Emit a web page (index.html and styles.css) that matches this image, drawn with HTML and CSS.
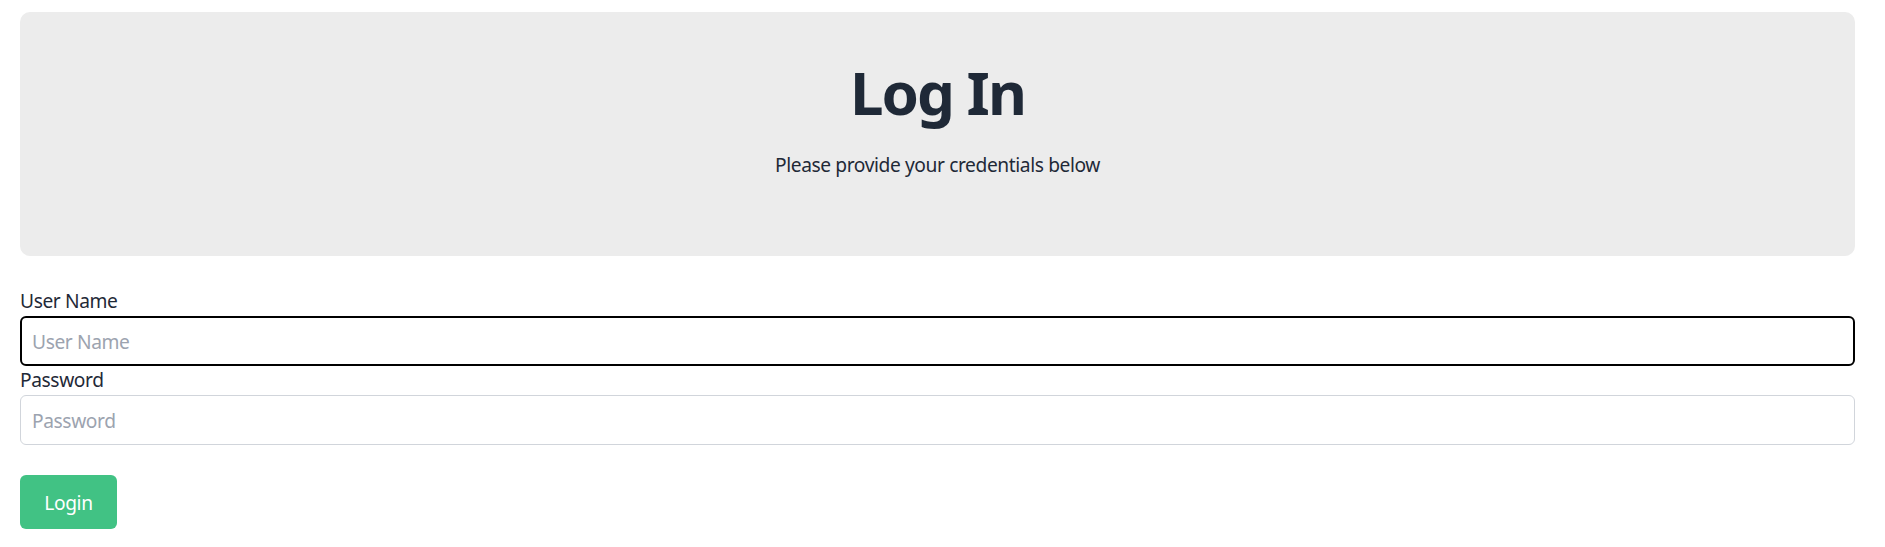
FILE: index.html
```html
<!DOCTYPE html>
<html lang="en">
<head>
<meta charset="utf-8">
<title>Log In</title>
<link rel="stylesheet" href="styles.css">
</head>
<body>
<main class="page">
  <section class="hero">
    <h1 class="hero-title">Log In</h1>
    <p class="hero-sub">Please provide your credentials below</p>
  </section>
  <form class="login-form">
    <label class="field-label" for="username">User Name</label>
    <input class="field-input is-focused" id="username" type="text" placeholder="User Name">
    <label class="field-label" for="password">Password</label>
    <input class="field-input" id="password" type="password" placeholder="Password">
    <button class="btn-login" type="button">Login</button>
  </form>
</main>
</body>
</html>
```

FILE: styles.css
```css
html, body {
  margin: 0;
  padding: 0;
  background: #ffffff;
}

body {
  font-family: "Noto Sans", "Open Sans", sans-serif;
  color: #1f2937;
  font-size: 19.2px;
  letter-spacing: -0.4px;
}

.page {
  padding: 12px 30px 0 20px;
}

.hero {
  background: #ececec;
  border-radius: 10px;
  height: 244px;
  box-sizing: border-box;
  padding-top: 50px;
  text-align: center;
}

.hero-title {
  margin: 0;
  font-size: 60px;
  line-height: 60px;
  font-weight: 700;
  letter-spacing: -2px;
  color: #1f2937;
}

.hero-sub {
  margin: 30px 0 0;
  font-size: 19.2px;
  line-height: 26px;
  color: #1f2937;
}

.login-form {
  display: flex;
  flex-direction: column;
  align-items: flex-start;
  margin-top: 32px;
}

.field-label {
  font-size: 19.2px;
  line-height: 26px;
  color: #1f2937;
}

.field-input {
  box-sizing: border-box;
  width: 100%;
  height: 50px;
  margin: 2px 0 1px;
  padding: 0 11px;
  border: 1px solid #d1d5db;
  border-radius: 6px;
  font-family: inherit;
  font-size: 19.2px;
  letter-spacing: -0.4px;
  color: #1f2937;
  background: #ffffff;
  outline: none;
}

.field-input::placeholder {
  color: #9ca3af;
}

.field-input.is-focused {
  border: 2px solid #000000;
  padding: 0 10px;
}

.btn-login {
  margin-top: 29px;
  width: 97px;
  height: 54px;
  border: none;
  border-radius: 6px;
  background: #41c284;
  color: #ffffff;
  font-family: inherit;
  font-size: 19.2px;
  letter-spacing: -0.4px;
  cursor: pointer;
}
```
